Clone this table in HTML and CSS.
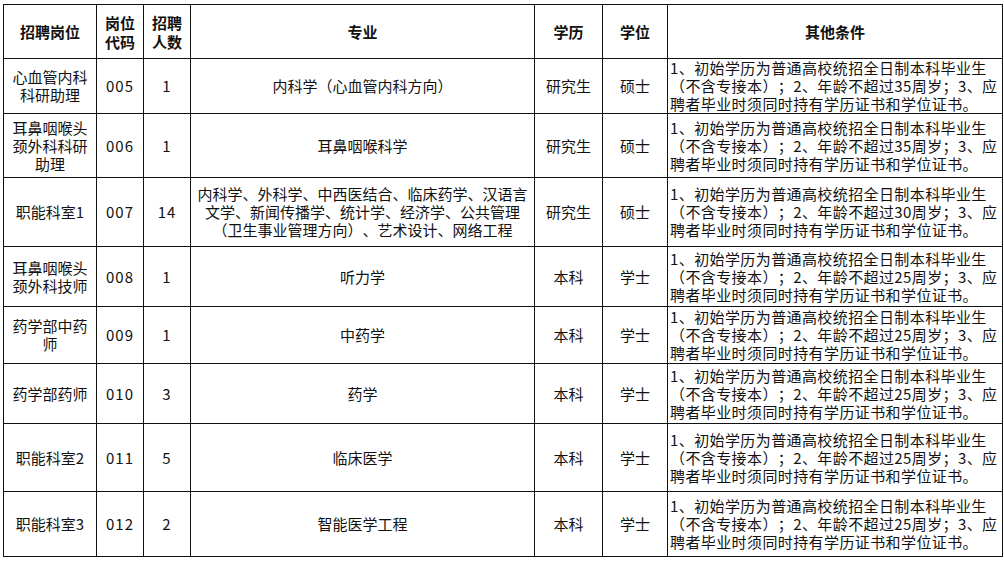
FILE: index.html
```html
<!DOCTYPE html>
<html lang="zh">
<head>
<meta charset="utf-8">
<link rel="stylesheet" href="styles.css">
</head>
<body>
<table class="jobs">
  <colgroup>
    <col class="c-post"><col class="c-code"><col class="c-num"><col class="c-major"><col class="c-edu"><col class="c-deg"><col class="c-other">
  </colgroup>
  <thead>
    <tr class="r-head">
      <th>招聘岗位</th>
      <th>岗位<br>代码</th>
      <th>招聘<br>人数</th>
      <th>专业</th>
      <th>学历</th>
      <th>学位</th>
      <th>其他条件</th>
    </tr>
  </thead>
  <tbody>
    <tr class="r1">
      <td>心血管内科<br>科研助理</td><td class="num">005</td><td class="num">1</td>
      <td>内科学（心血管内科方向）</td><td>研究生</td><td>硕士</td>
      <td class="other">1、初始学历为普通高校统招全日制本科毕业生<br>（不含专接本）；2、年龄不超过35周岁；3、应<br>聘者毕业时须同时持有学历证书和学位证书。</td>
    </tr>
    <tr class="r2">
      <td>耳鼻咽喉头<br>颈外科科研<br>助理</td><td class="num">006</td><td class="num">1</td>
      <td>耳鼻咽喉科学</td><td>研究生</td><td>硕士</td>
      <td class="other">1、初始学历为普通高校统招全日制本科毕业生<br>（不含专接本）；2、年龄不超过35周岁；3、应<br>聘者毕业时须同时持有学历证书和学位证书。</td>
    </tr>
    <tr class="r3">
      <td>职能科室1</td><td class="num">007</td><td class="num">14</td>
      <td>内科学、外科学、中西医结合、临床药学、汉语言<br>文学、新闻传播学、统计学、经济学、公共管理<br>（卫生事业管理方向）、艺术设计、网络工程</td><td>研究生</td><td>硕士</td>
      <td class="other">1、初始学历为普通高校统招全日制本科毕业生<br>（不含专接本）；2、年龄不超过30周岁；3、应<br>聘者毕业时须同时持有学历证书和学位证书。</td>
    </tr>
    <tr class="r4">
      <td>耳鼻咽喉头<br>颈外科技师</td><td class="num">008</td><td class="num">1</td>
      <td>听力学</td><td>本科</td><td>学士</td>
      <td class="other">1、初始学历为普通高校统招全日制本科毕业生<br>（不含专接本）；2、年龄不超过25周岁；3、应<br>聘者毕业时须同时持有学历证书和学位证书。</td>
    </tr>
    <tr class="r5">
      <td>药学部中药<br>师</td><td class="num">009</td><td class="num">1</td>
      <td>中药学</td><td>本科</td><td>学士</td>
      <td class="other">1、初始学历为普通高校统招全日制本科毕业生<br>（不含专接本）；2、年龄不超过25周岁；3、应<br>聘者毕业时须同时持有学历证书和学位证书。</td>
    </tr>
    <tr class="r6">
      <td>药学部药师</td><td class="num">010</td><td class="num">3</td>
      <td>药学</td><td>本科</td><td>学士</td>
      <td class="other">1、初始学历为普通高校统招全日制本科毕业生<br>（不含专接本）；2、年龄不超过25周岁；3、应<br>聘者毕业时须同时持有学历证书和学位证书。</td>
    </tr>
    <tr class="r7">
      <td>职能科室2</td><td class="num">011</td><td class="num">5</td>
      <td>临床医学</td><td>本科</td><td>学士</td>
      <td class="other">1、初始学历为普通高校统招全日制本科毕业生<br>（不含专接本）；2、年龄不超过25周岁；3、应<br>聘者毕业时须同时持有学历证书和学位证书。</td>
    </tr>
    <tr class="r8">
      <td>职能科室3</td><td class="num">012</td><td class="num">2</td>
      <td>智能医学工程</td><td>本科</td><td>学士</td>
      <td class="other">1、初始学历为普通高校统招全日制本科毕业生<br>（不含专接本）；2、年龄不超过25周岁；3、应<br>聘者毕业时须同时持有学历证书和学位证书。</td>
    </tr>
  </tbody>
</table>
</body>
</html>
```

FILE: styles.css
```css
html, body {
  margin: 0;
  padding: 0;
  background: #fff;
}
body {
  padding: 4px 0 0 3px;
  font-family: "Noto Sans CJK SC", "Noto Sans", sans-serif;
  color: #111;
}
.jobs {
  border-collapse: collapse;
  table-layout: fixed;
  width: 999px;
  font-size: 15px;
  line-height: 18px;
  text-spacing-trim: space-all;
}
.c-post { width: 93px; }
.c-code { width: 47px; }
.c-num { width: 47px; }
.c-major { width: 344px; }
.c-edu { width: 68px; }
.c-deg { width: 65px; }
.c-other { width: 335px; }

.jobs th, .jobs td {
  border: 1px solid #111;
  padding: 0;
  text-align: center;
  vertical-align: middle;
  white-space: nowrap;
  overflow: hidden;
  font-weight: normal;
}
.jobs th {
  font-weight: bold;
  line-height: 19px;
}
.jobs td.num {
  letter-spacing: 1px;
}
.jobs td.other {
  text-align: left;
  letter-spacing: 0.4px;
  padding-left: 2px;
  line-height: 18px;
}
.r-head { height: 54px; }
.r1 { height: 54px; }
.r2 { height: 64px; }
.r3 { height: 69px; }
.r4 { height: 60px; }
.r5 { height: 57px; }
.r6 { height: 60px; }
.r7 { height: 68px; }
.r8 { height: 65px; }
```
